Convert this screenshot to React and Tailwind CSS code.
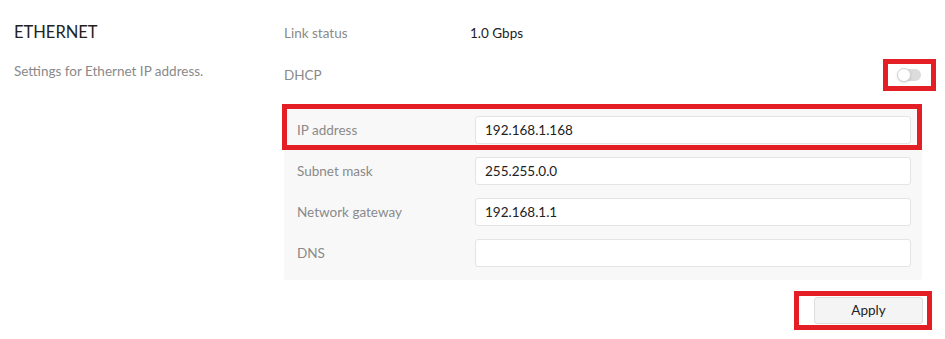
import React from "react";

function Field({ label, value }) {
  return (
    <div className="flex items-center h-[28px]">
      <div className="w-[178px] text-[13.5px] text-[#8a8a8a]">{label}</div>
      <div className="flex-1 h-[28px] bg-white border border-[#e4e4e4] rounded-[3px] flex items-center pl-[9px] text-[13.5px] text-[#222]">
        {value}
      </div>
    </div>
  );
}

export default function App() {
  return (
    <div
      className="w-[945px] h-[339px] bg-white flex"
      style={{ fontFamily: "Lato, 'Open Sans', sans-serif" }}
    >
      <div className="w-[284px] shrink-0 pl-[14px] pt-[21px]">
        <div className="text-[16.5px] text-[#222] leading-[22px]">ETHERNET</div>
        <div className="mt-[18px] text-[13.5px] text-[#8a8a8a] leading-[20px]">
          Settings for Ethernet IP address.
        </div>
      </div>
      <div className="w-[638px] shrink-0">
        <div className="mt-[23px] h-[20px] flex items-center text-[13.5px]">
          <div className="w-[186px] text-[#8a8a8a]">Link status</div>
          <div className="text-[#222]">1.0 Gbps</div>
        </div>
        <div className="mt-[22px] h-[20px] flex items-center justify-between text-[13.5px]">
          <div className="text-[#8a8a8a]">DHCP</div>
          <div className="relative mr-[1px]">
            <div className="w-[23px] h-[12px] rounded-full bg-[#dcdcdc] relative">
              <div className="absolute left-[-1px] top-[-1px] w-[14px] h-[14px] rounded-full bg-white border border-[#d0d0d0] shadow-sm"></div>
            </div>
            <div className="absolute left-[-15px] right-[-15px] top-[-10px] bottom-[-10px] border-[5px] border-[#e31e24]"></div>
          </div>
        </div>
        <div className="relative mt-[19px] bg-[#f8f8f8] rounded-[3px] pt-[12px] pb-[13px] pl-[13px] pr-[11px] flex flex-col gap-[13px]">
          <Field label="IP address" value="192.168.1.168" />
          <Field label="Subnet mask" value="255.255.0.0" />
          <Field label="Network gateway" value="192.168.1.1" />
          <Field label="DNS" value="" />
          <div className="absolute left-[-2px] right-0 top-0 h-[46px] border-[5px] border-[#e31e24]"></div>
        </div>
        <div className="flex justify-end mt-[17px]">
          <div className="relative mr-[-1px]">
            <button className="w-[109px] h-[27px] bg-[#f4f4f4] border border-[#dedede] rounded-[3px] text-[13.5px] text-[#222] flex items-center justify-center">
              Apply
            </button>
            <div className="absolute left-[-20px] right-[-9px] top-[-6px] bottom-[-6px] border-[5px] border-[#e31e24]"></div>
          </div>
        </div>
      </div>
    </div>
  );
}
